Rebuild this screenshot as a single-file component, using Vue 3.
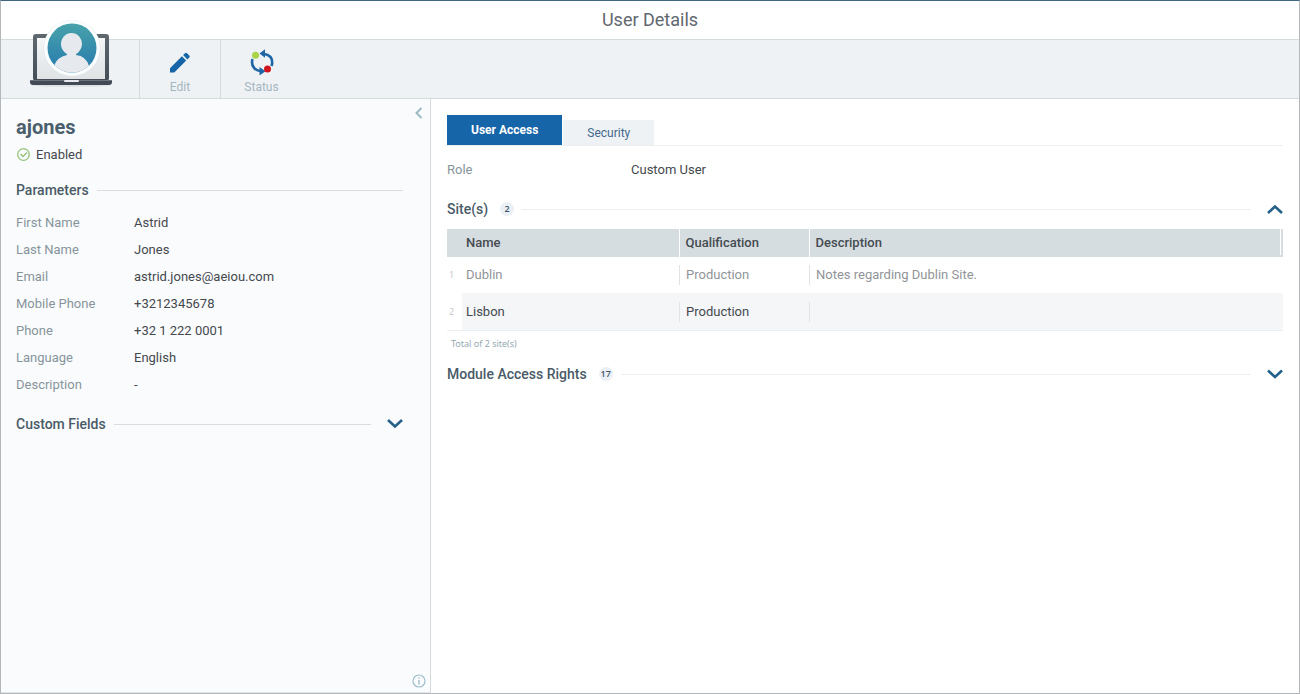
<script setup>
import { ref } from 'vue'

const parameters = [
  { label: 'First Name', value: 'Astrid' },
  { label: 'Last Name', value: 'Jones' },
  { label: 'Email', value: 'astrid.jones@aeiou.com' },
  { label: 'Mobile Phone', value: '+3212345678' },
  { label: 'Phone', value: '+32 1 222 0001' },
  { label: 'Language', value: 'English' },
  { label: 'Description', value: '-' },
]

const sites = [
  { name: 'Dublin', qualification: 'Production', description: 'Notes regarding Dublin Site.', muted: true },
  { name: 'Lisbon', qualification: 'Production', description: '', muted: false },
]

const tab = ref('access')
const sitesOpen = ref(true)
</script>

<template>
  <div class="window">
    <header class="titlebar">
      <h1>User Details</h1>
    </header>

    <div class="toolbar">
      <div class="brand">
        <svg class="laptop" width="90" height="76" viewBox="0 0 90 76" aria-hidden="true">
          <defs>
            <linearGradient id="screen" x1="0" y1="0" x2="0" y2="1">
              <stop offset="0" stop-color="#f4f6f7" />
              <stop offset="1" stop-color="#dfe3e5" />
            </linearGradient>
            <linearGradient id="frame" x1="0" y1="0" x2="0" y2="1">
              <stop offset="0" stop-color="#606870" />
              <stop offset="1" stop-color="#444c56" />
            </linearGradient>
            <linearGradient id="disc" x1="0" y1="0" x2="0" y2="1">
              <stop offset="0" stop-color="#48a2aa" />
              <stop offset="1" stop-color="#2679ae" />
            </linearGradient>
            <clipPath id="disc-clip"><circle cx="46" cy="32" r="24.5" /></clipPath>
          </defs>
          <ellipse cx="45" cy="69" rx="40" ry="2" fill="#dde1e4" />
          <rect x="7" y="18" width="76" height="47" rx="3" fill="url(#frame)" />
          <rect x="11" y="22" width="68" height="41" fill="url(#screen)" />
          <path d="M4 64h82v2q0 3-3 3H7q-3 0-3-3z" fill="#414a55" />
          <path d="M4 64.500h82" stroke="#6b737c" />
          <rect x="38" y="64" width="15" height="2" rx="1" fill="#e8ebed" />
          <circle cx="46" cy="32.500" r="28.500" fill="#dfe5e8" />
          <circle cx="46" cy="32" r="28" fill="#fafdfd" />
          <circle cx="46" cy="32" r="24.500" fill="url(#disc)" />
          <g clip-path="url(#disc-clip)" fill="#e6eaee">
            <ellipse cx="45.500" cy="28" rx="10.500" ry="11" />
            <path d="M41 34h9v5q10 1 13 11v8H28v-8q3-9 13-11z" />
          </g>
        </svg>
      </div>
      <button type="button" class="tool">
        <svg width="26" height="26" viewBox="0 0 26 26" aria-hidden="true">
          <path d="M3 19.200 14.900 7.300l4.300 4.300L7.300 23.500H3zM16.100 6.100l1.900-1.900q1-1 2 0l2.300 2.300q1 1 0 2l-1.900 1.900z" fill="#1565a8" />
        </svg>
        <span>Edit</span>
      </button>
      <button type="button" class="tool">
        <svg width="26" height="26" viewBox="0 0 26 26" aria-hidden="true">
          <g fill="none" stroke="#1f66a6" stroke-width="2.600">
            <path d="M14.500 4.800Q23.500 6 23.200 14q-.2 1.800-.8 3" />
            <path d="M12.500 22.300Q3 21 3 13q0-1.600.6-3" />
          </g>
          <path d="M16 .2v8.500l-5.500-4.300zM10.500 18v8.500l6-4.300z" fill="#1f66a6" />
          <circle cx="6.500" cy="6.300" r="3.500" fill="#a9d447" />
          <circle cx="18.500" cy="20" r="3.500" fill="#d0141e" />
        </svg>
        <span>Status</span>
      </button>
    </div>

    <div class="body">
      <aside class="side">
        <button type="button" class="icon-button collapse" aria-label="Collapse panel">
          <svg width="8" height="12" viewBox="0 0 8 12" aria-hidden="true">
            <path d="M6.500 1 1.500 6l5 5" fill="none" stroke="#9db9c4" stroke-width="2" />
          </svg>
        </button>
        <h2 class="user">ajones</h2>
        <p class="state">
          <svg width="14" height="14" viewBox="0 0 14 14" fill="none" stroke="#94c47d" aria-hidden="true">
            <circle cx="7.500" cy="6.500" r="5.800" stroke-width="1.300" />
            <path d="m4.500 6 2.500 2.500L11 4.500" stroke-width="1.500" />
          </svg>
          Enabled
        </p>

        <div class="section side-section">
          <h3>Parameters</h3>
          <span class="rule"></span>
        </div>
        <dl class="fields">
          <div v-for="p in parameters" :key="p.label">
            <dt>{{ p.label }}</dt>
            <dd>{{ p.value }}</dd>
          </div>
        </dl>
        <div class="section side-section custom">
          <h3>Custom Fields</h3>
          <span class="rule"></span>
          <button type="button" class="icon-button" aria-label="Expand custom fields">
            <svg width="16" height="10" viewBox="0 0 16 10" aria-hidden="true">
              <path d="m1 1 7 6.500L15 1" fill="none" stroke="#256089" stroke-width="2.600" />
            </svg>
          </button>
        </div>

        <button type="button" class="icon-button info" aria-label="Information">
          <svg width="14" height="14" viewBox="0 0 14 14" fill="none" stroke="#9fbfcc" aria-hidden="true">
            <circle cx="7" cy="7" r="6" stroke-width="1.200" />
            <path d="M7 6v4.500M7 3.500v1.300" stroke-width="1.400" />
          </svg>
        </button>
      </aside>

      <main class="main">
        <div class="tabs" role="tablist">
          <button type="button" role="tab" class="tab" :class="{ active: tab === 'access' }" :aria-selected="tab === 'access'" @click="tab = 'access'">User Access</button>
          <button type="button" role="tab" class="tab" :class="{ active: tab === 'security' }" :aria-selected="tab === 'security'" @click="tab = 'security'">Security</button>
        </div>

        <dl class="role">
          <dt>Role</dt>
          <dd>Custom User</dd>
        </dl>

        <div class="section main-section">
          <h3>Site(s)</h3>
          <span class="count">2</span>
          <span class="rule"></span>
          <button type="button" class="icon-button" aria-label="Toggle sites" :aria-expanded="sitesOpen" @click="sitesOpen = !sitesOpen">
            <svg width="16" height="10" viewBox="0 0 16 10" aria-hidden="true">
              <path :d="sitesOpen ? 'm1 9 7-6.500L15 9' : 'm1 1.500 7 6.500 7-6.500'" fill="none" stroke="#256089" stroke-width="2.600" />
            </svg>
          </button>
        </div>

        <div v-show="sitesOpen">
          <table class="sites">
            <colgroup>
              <col class="c-index" />
              <col class="c-name" />
              <col class="c-qualification" />
              <col />
            </colgroup>
            <thead>
              <tr>
                <td></td>
                <th scope="col">Name</th>
                <th scope="col">Qualification</th>
                <th scope="col">Description</th>
              </tr>
            </thead>
            <tbody>
              <tr v-for="(s, i) in sites" :key="s.name" :class="{ muted: s.muted }">
                <td class="index">{{ i + 1 }}</td>
                <td>{{ s.name }}</td>
                <td><span class="cell">{{ s.qualification }}</span></td>
                <td><span class="cell">{{ s.description }}</span></td>
              </tr>
            </tbody>
          </table>
          <p class="total">Total of 2 site(s)</p>
        </div>

        <div class="section main-section modules">
          <h3>Module Access Rights</h3>
          <span class="count">17</span>
          <span class="rule"></span>
          <button type="button" class="icon-button" aria-label="Expand module access rights">
            <svg width="16" height="10" viewBox="0 0 16 10" aria-hidden="true">
              <path d="m1 1.500 7 6.500 7-6.500" fill="none" stroke="#256089" stroke-width="2.600" />
            </svg>
          </button>
        </div>
      </main>
    </div>
  </div>
</template>

<style>
body {
  margin: 0;
}
</style>

<style scoped>
.window {
  box-sizing: border-box;
  display: flex;
  flex-direction: column;
  min-height: 100vh;
  border: 1px solid #b4b7ba;
  border-top-color: #3f6683;
  background: #fff;
  color: #45494e;
  font: 13px/20px Roboto, "Liberation Sans", sans-serif;
}
h1,
h2,
h3,
p,
dl,
dd {
  margin: 0;
}
button {
  padding: 0;
  border: 0;
  background: none;
  font: inherit;
  cursor: pointer;
}
svg {
  display: block;
}
.titlebar {
  height: 38px;
  text-align: center;
}
h1 {
  color: #62686f;
  font-size: 18px;
  font-weight: 400;
  line-height: 38px;
}
.toolbar {
  display: flex;
  height: 58px;
  border-top: 1px solid #d5dadd;
  border-bottom: 1px solid #d5dadd;
  background: #eef2f5;
}
.brand,
.tool {
  box-sizing: border-box;
  border-right: 1px solid #d5dadd;
}
.brand {
  position: relative;
  width: 139px;
}
.laptop {
  position: absolute;
  bottom: 6px;
  left: 25px;
}
.tool {
  display: flex;
  flex-direction: column;
  align-items: center;
  gap: 2px;
  width: 81px;
  padding-top: 9px;
  color: #a5b6c1;
  font-size: 12px;
  line-height: 20px;
}
.tool:last-child {
  border-right: 0;
}
.body {
  display: flex;
  flex: 1;
}
.side {
  position: relative;
  box-sizing: border-box;
  width: 430px;
  padding: 16px 27px 16px 15px;
  border-right: 1px solid #d5dadd;
  border-bottom: 1px solid #e2e5e8;
  background: #fafbfd;
}
.collapse {
  position: absolute;
  top: 8px;
  right: 7px;
}
.info {
  position: absolute;
  right: 4px;
  bottom: 4px;
}
.user {
  color: #4a5f6d;
  font-size: 20px;
  font-weight: 700;
  line-height: 24px;
}
.state {
  display: flex;
  align-items: center;
  gap: 6px;
  margin-top: 6px;
}
.section {
  display: flex;
  align-items: center;
}
.section h3 {
  color: #4a5b68;
  font-size: 14px;
  font-weight: 500;
  line-height: 20px;
}
.rule {
  flex: 1;
  height: 1px;
  background: #d9dddf;
}
.side-section {
  gap: 8px;
  margin-top: 15px;
}
.custom {
  margin-top: 16px;
}
.side-section .icon-button {
  margin-left: 8px;
}
.fields {
  margin-top: 9px;
}
.fields div {
  display: flex;
  line-height: 27px;
}
.fields dt {
  width: 118px;
}
dt {
  color: #87959b;
}
.main {
  flex: 1;
  min-width: 0;
  padding: 16px;
}
.tabs {
  display: flex;
  align-items: flex-end;
  gap: 1px;
  height: 30px;
  border-bottom: 1px solid #eceff1;
}
.tab {
  height: 25px;
  padding: 0 24px;
  background: #eef2f5;
  color: #44698c;
  font-size: 12px;
}
.tab.active {
  height: 30px;
  background: #1565a8;
  color: #fff;
  font-weight: 700;
}
.role {
  display: flex;
  margin-top: 14px;
}
.role dt {
  width: 184px;
}
.main-section {
  margin-top: 19px;
}
.main-section .rule {
  margin-left: 8px;
  background: #eceff1;
}
.main-section .icon-button {
  margin-left: 16px;
}
.count {
  min-width: 14px;
  height: 14px;
  margin-left: 12px;
  border-radius: 7px;
  background: #eaf0f5;
  color: #43566b;
  font: 600 9px/14px "Open Sans", sans-serif;
  text-align: center;
}
.sites {
  width: 100%;
  margin-top: 10px;
  border-collapse: collapse;
  border-bottom: 1px solid #eceff1;
  table-layout: fixed;
}
.c-index {
  width: 15px;
}
.c-name {
  width: 217px;
}
.c-qualification {
  width: 130px;
}
thead {
  background: #d6dde1;
}
th {
  height: 28px;
  padding: 0 0 0 6px;
  color: #454b50;
  font-weight: 500;
  text-align: left;
}
th + th {
  border-left: 1px solid #fff;
}
th:nth-child(2) {
  padding-left: 4px;
}
th:last-child {
  background: linear-gradient(#fff, #fff) right 2px top / 1px 26px no-repeat;
}
tbody td {
  height: 36px;
  padding: 0;
}
tbody tr + tr td {
  height: 37px;
}
tbody td:nth-child(2) {
  padding-left: 4px;
}
tbody tr:nth-child(even) td:not(.index) {
  background: #f4f6f8;
}
.muted {
  color: #919599;
}
tbody .index {
  padding-left: 2px;
  color: #bfc6ca;
  font: 9px/20px "Open Sans", sans-serif;
}
.cell {
  display: block;
  height: 20px;
  padding-left: 6px;
  border-left: 1px solid #e0e4e6;
}
.total {
  padding-left: 4px;
  margin-top: 3px;
  color: #95a9b2;
  font: 9px/20px "Noto Sans", "Open Sans", sans-serif;
}
.modules {
  margin-top: 10px;
}
</style>
